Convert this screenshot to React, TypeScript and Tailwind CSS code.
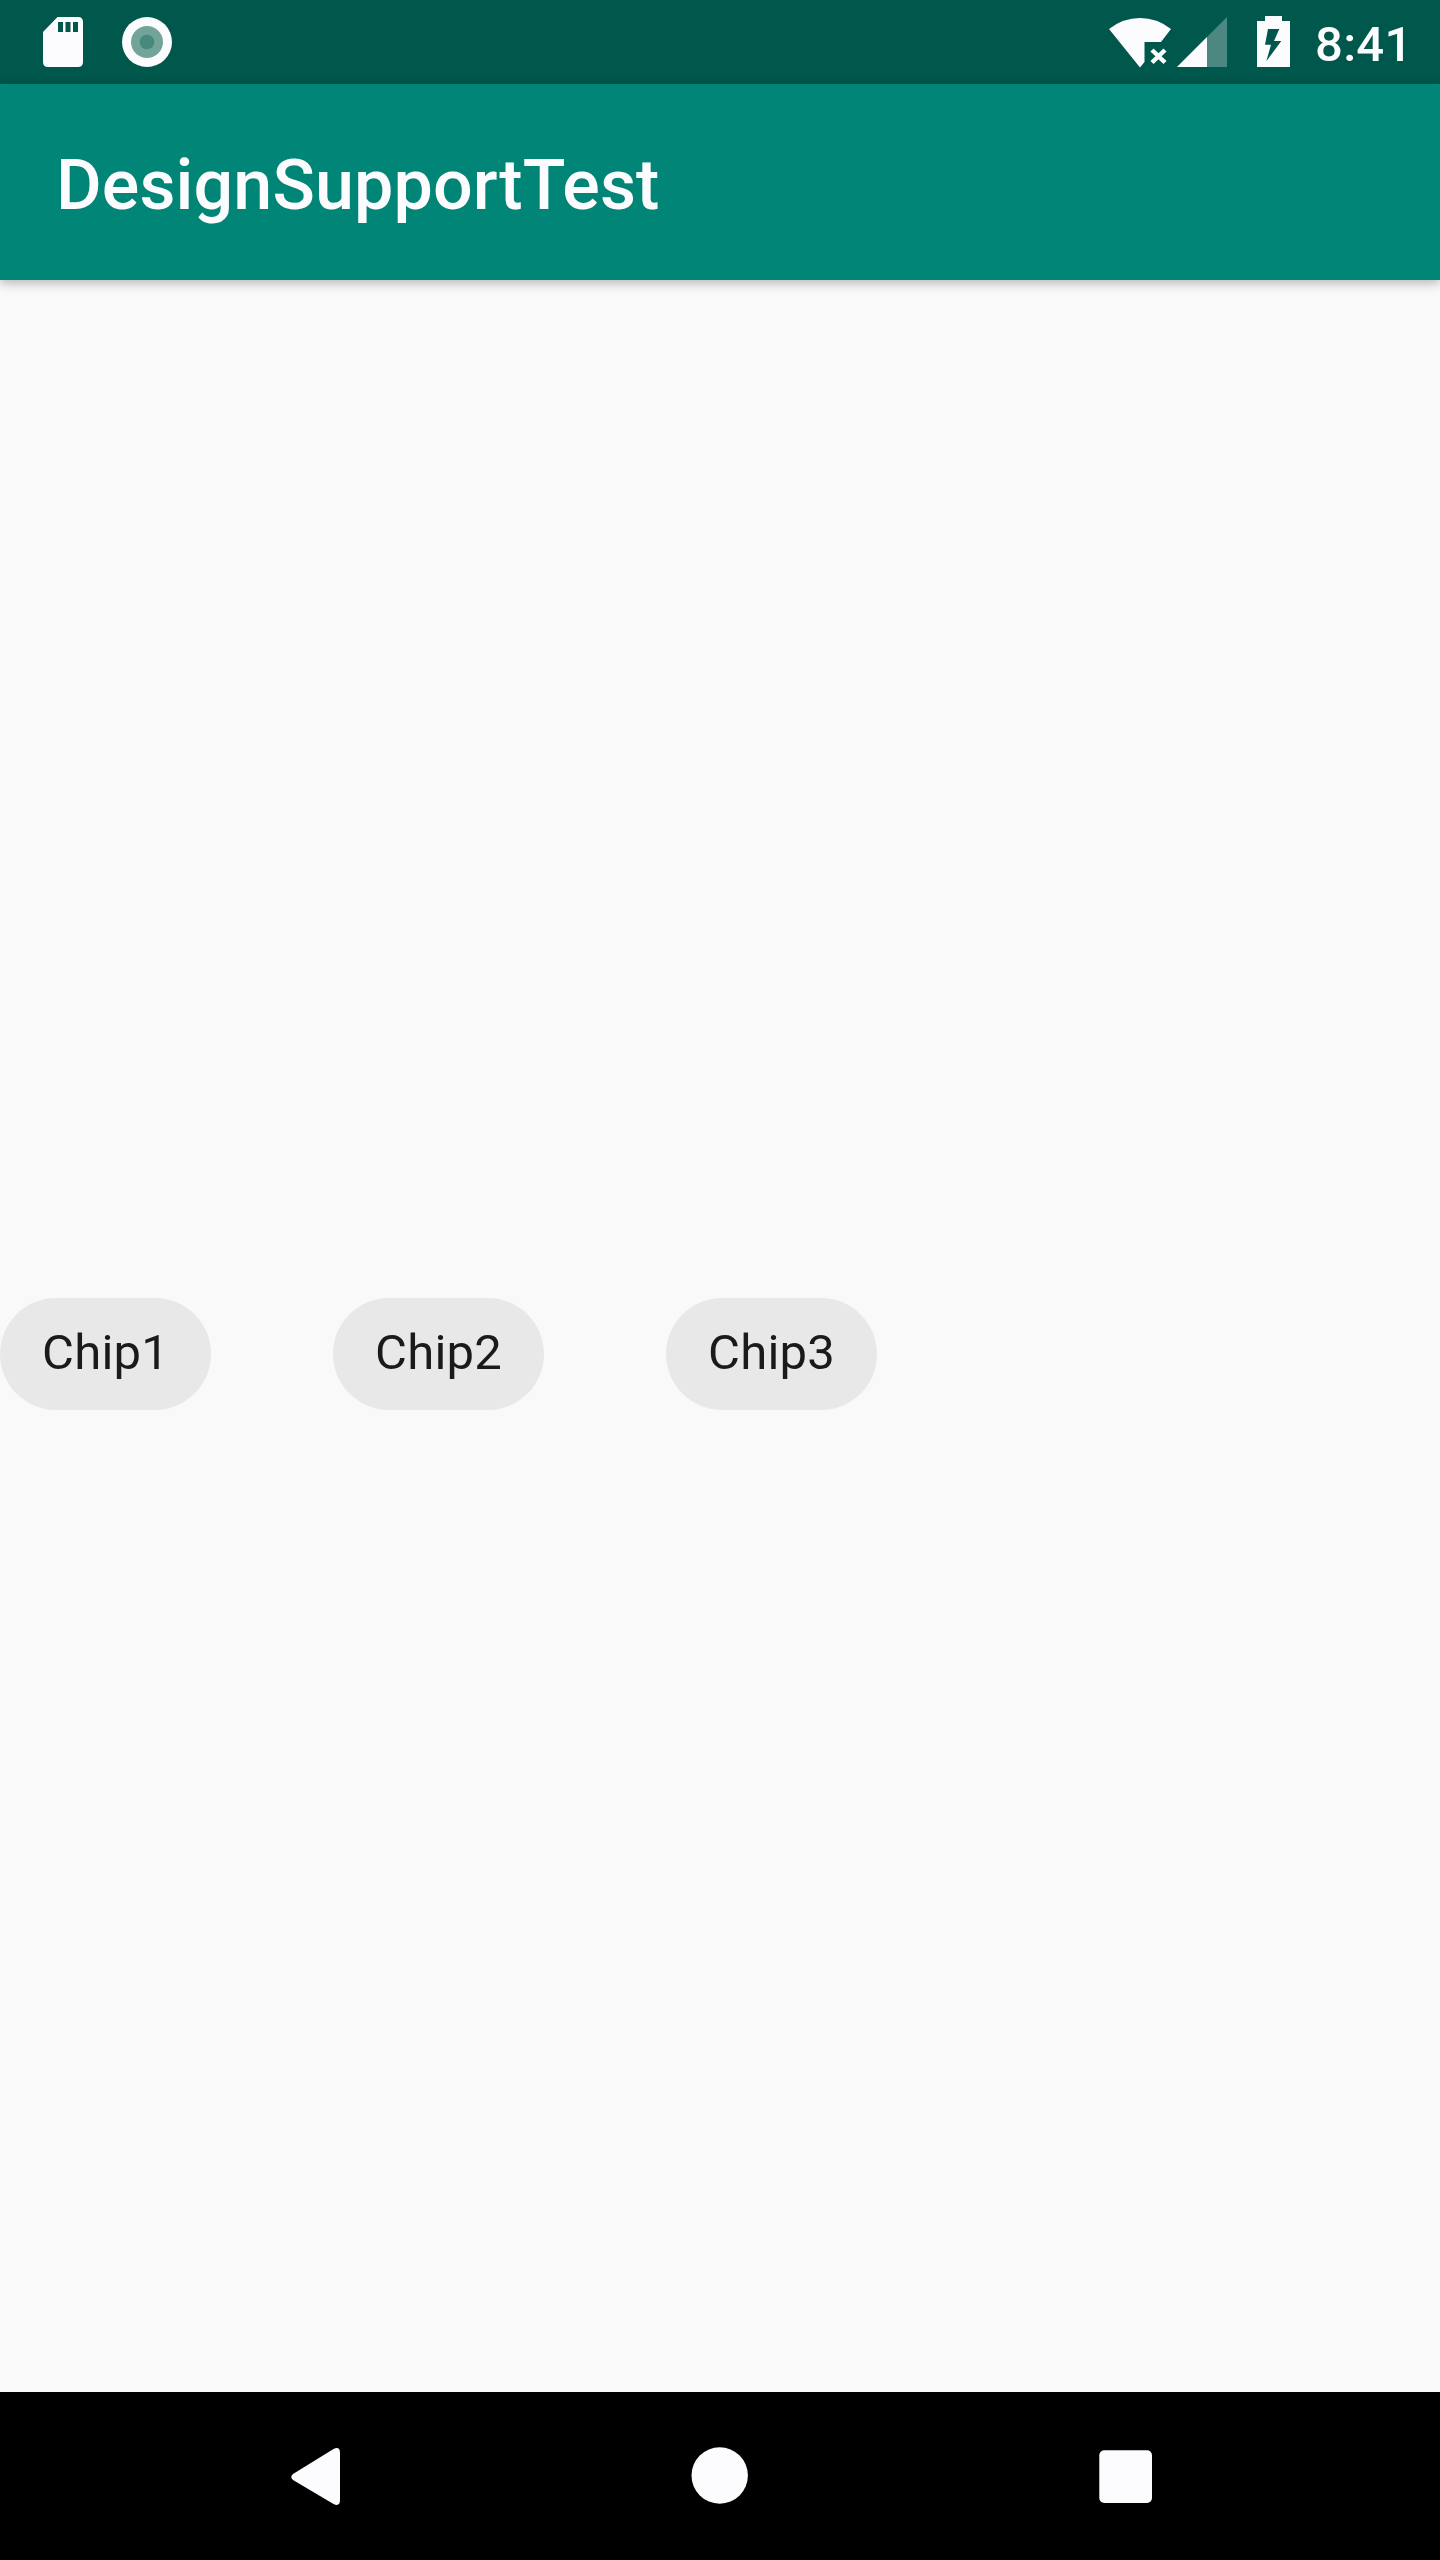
const chips = ['Chip1', 'Chip2', 'Chip3'];

function StatusBar() {
  return (
    <div className="flex h-[84px] shrink-0 justify-between bg-[#00574b] text-[#fcfcfe]">
      <svg className="ml-5 h-[84px] w-[180px]" viewBox="20 0 180 84" fill="currentColor">
        <path
          fillRule="evenodd"
          d="M57.5 17H78q5 0 5 5v40q0 5-5 5H48q-5 0-5-5V32Zm.5 5v10h5V22Zm7.5 0v10h5V22Zm7.5 0v10h5V22Z"
        />
        <circle cx="147" cy="42" r="25" />
        <circle cx="147" cy="42" r="16" fill="#73a499" />
        <circle cx="147" cy="42" r="7.3" fill="#478a7d" />
      </svg>
      <div className="flex">
        <svg className="h-[84px] w-[200px]" viewBox="1100 0 200 84" fill="currentColor">
          <path d="M1109 29Q1123 18 1140 18T1171 29L1161 42H1144.500V62L1140 67.500Z" />
          <path d="m1152 50 13 12.500m0-12.500-13 12.500" stroke="currentColor" strokeWidth="4.500" fill="none" />
          <path d="M1227 17V67H1177Z" opacity=".3" />
          <path d="M1207 37V67H1177Z" />
          <path
            fillRule="evenodd"
            d="M1265 16h17v5h8v46h-33V21h8Zm3 13-3 15.700h6l-4.700 16.600 15-20.300h-7.300l5.300-12Z"
          />
        </svg>
        <span className="mr-[34px] mt-4 ml-[15px] w-[91px] whitespace-nowrap text-[49px] leading-[57px] font-medium tracking-[0.3px]">
          8:41
        </span>
      </div>
    </div>
  );
}

function NavigationBar() {
  return (
    <div className="flex h-[168px] shrink-0 bg-black">
      <svg className="h-[168px] w-full" viewBox="0 2392 1440 168" fill="#fcfcfe">
        <path d="M293 2474 333.500 2449Q340 2446 340 2453V2500Q340 2507 333.500 2504L293 2480Q289.500 2477 293 2474Z" />
        <circle cx="719.700" cy="2475.500" r="28.200" />
        <rect x="1099.300" y="2450.300" width="52.700" height="52.700" rx="5" />
      </svg>
    </div>
  );
}

export default function App() {
  return (
    <div className="flex h-[2560px] w-[1440px] flex-col overflow-hidden bg-[#f9f9f9] font-['Roboto',sans-serif]">
      <StatusBar />
      <header className="relative flex h-[196px] shrink-0 items-center bg-[#008577] px-14 shadow-[0_3px_10px_rgba(0,0,0,0.28)]">
        <h1 className="mt-[5px] text-[70px] leading-[82px] font-medium tracking-[0.12px] text-[#fcfcfe]">
          DesignSupportTest
        </h1>
      </header>
      <main className="flex flex-1 items-start gap-[122px] pt-[1017.500px]">
        {chips.map((label) => (
          <div
            key={label}
            className="flex h-[112px] w-[211px] items-center rounded-full bg-[#e8e8e8] pb-[2px] pl-[42px] text-[49px] leading-[57px] tracking-[0.25px] text-[#1a1a1a]"
          >
            {label}
          </div>
        ))}
      </main>
      <NavigationBar />
    </div>
  );
}
